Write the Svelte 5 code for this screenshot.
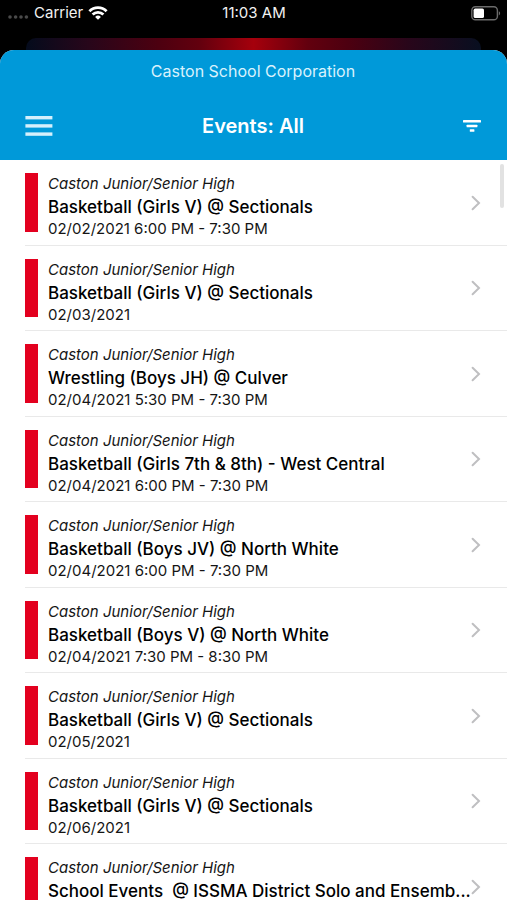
<script lang="ts">

	// Types

	type SchoolEvent = {
		school: string;
		title: string;
		date: string;
	};



	// Variables

	const school: string = "Caston Junior/Senior High";

	const events: SchoolEvent[] = [
		{school, title: "Basketball (Girls V) @ Sectionals", date: "02/02/2021 6:00 PM - 7:30 PM"},
		{school, title: "Basketball (Girls V) @ Sectionals", date: "02/03/2021"},
		{school, title: "Wrestling (Boys JH) @ Culver", date: "02/04/2021 5:30 PM - 7:30 PM"},
		{school, title: "Basketball (Girls 7th & 8th) - West Central", date: "02/04/2021 6:00 PM - 7:30 PM"},
		{school, title: "Basketball (Boys JV) @ North White", date: "02/04/2021 6:00 PM - 7:30 PM"},
		{school, title: "Basketball (Boys V) @ North White", date: "02/04/2021 7:30 PM - 8:30 PM"},
		{school, title: "Basketball (Girls V) @ Sectionals", date: "02/05/2021"},
		{school, title: "Basketball (Girls V) @ Sectionals", date: "02/06/2021"},
		{school, title: "School Events  @ ISSMA District Solo and Ensemb...", date: ""}
	];

</script>

<div class="screen">

	<div class="status">
		<div class="carrier">
			<svg class="signal" width="22" height="6" viewBox="0 0 22 6">
				<circle cx="3" cy="3" r="1.8" />
				<circle cx="8.6" cy="3" r="1.8" />
				<circle cx="14" cy="3" r="1.8" />
				<circle cx="19.4" cy="3" r="1.8" />
			</svg>
			<span>Carrier</span>
			<svg width="20" height="16" viewBox="0 0 20 16" fill="none" stroke="#fff" stroke-width="2.8">
				<path d="M1.4 6.2a12.2 12.2 0 0 1 17.2 0" />
				<path d="M4.6 9.6a7.7 7.7 0 0 1 10.8 0" />
				<path d="M10 14.8l-2.9-2.9a4.1 4.1 0 0 1 5.8 0z" fill="#fff" stroke="none" />
			</svg>
		</div>
		<span class="time">11:03 AM</span>
		<svg class="battery" width="30" height="15" viewBox="0 0 30 15">
			<rect x="0.8" y="0.8" width="25.6" height="13" rx="3.6" fill="none" stroke="#6b6b6b" stroke-width="1.4" />
			<rect x="2.6" y="2.6" width="10.4" height="9.4" rx="1.6" fill="#fff" />
			<path d="M27.8 5.2c1.8.6 1.8 3.6 0 4.2z" fill="#6b6b6b" />
		</svg>
	</div>

	<div class="behind"></div>

	<main class="sheet">
		<header>
			<p>Caston School Corporation</p>
			<div class="bar">
				<button aria-label="Menu">
					<svg width="28" height="20" viewBox="0 0 28 20" fill="#d5f0fc">
						<rect x="0.4" y="0" width="27" height="3.4" />
						<rect x="0.4" y="8.2" width="27" height="3.4" />
						<rect x="0.4" y="16.4" width="27" height="3.4" />
					</svg>
				</button>
				<h1>Events: All</h1>
				<button aria-label="Filter">
					<svg width="18" height="12" viewBox="0 0 18 12" fill="#fff">
						<rect x="0" y="0" width="18" height="2.6" rx="0.6" />
						<rect x="3.6" y="4.7" width="10.8" height="2.6" rx="0.6" />
						<rect x="6.8" y="9.2" width="4.6" height="2.6" rx="0.6" />
					</svg>
				</button>
			</div>
		</header>

		<div class="content">
			<ul>
				{#each events as event}
					<li>
						<span class="color"></span>
						<div class="text">
							<em>{event.school}</em>
							<strong>{event.title}</strong>
							<span>{event.date}</span>
						</div>
						<svg class="chevron" width="10" height="16" viewBox="0 0 10 16">
							<path d="M1.6 1.8l6.4 6.2-6.4 6.2" fill="none" stroke="#bfbfc1" stroke-width="2" stroke-linecap="round" />
						</svg>
					</li>
				{/each}
			</ul>
			<div class="thumb"></div>
		</div>
	</main>

</div>

<style>

	:global(body){
		margin: 0;
		background: #000;
	}

	.screen{
		display: flex;
		flex-direction: column;
		height: 100vh;
		background: #000;
		font-family: Inter, "Liberation Sans", sans-serif;
		color: #151515;
	}

	.status{
		display: grid;
		grid-template-columns: 1fr auto 1fr;
		align-items: center;
		height: 26px;
		margin-bottom: 12px;
		padding: 0 6px 0 7px;
		color: #f2f2f2;
		font-size: 15px;
		line-height: 20px;
	}

	.carrier{
		display: flex;
		align-items: center;
		gap: 5px;
	}

	.signal{
		fill: #4a4a4a;
		margin-top: 8px;
	}

	.battery{
		justify-self: end;
	}

	.behind{
		height: 12px;
		margin: 0 26px;
		border-radius: 10px 10px 0 0;
		background: linear-gradient(90deg, #040b1c, #28061a 14%, #4c0010 29%, #62000e 38%, #a5000c 50%, #62000e 62%, #4c0010 71%, #28061a 84%, #080f20);
	}

	.sheet{
		display: flex;
		flex-direction: column;
		flex: 1;
		min-height: 0;
		border-radius: 14px 14px 0 0;
		background: #fff;
		overflow: hidden;
	}

	header{
		padding: 9px 26px 14px 25px;
		background: #0099d9;
		color: #fff;
	}

	header
	p{
		margin: 0 0 23px;
		color: #d9f2fd;
		font-size: 16px;
		line-height: 24px;
		text-align: center;
	}

	.bar{
		display: grid;
		grid-template-columns: 1fr auto 1fr;
		align-items: center;
		height: 40px;
	}

	h1{
		margin: 0;
		font-size: 20px;
		font-weight: 600;
		line-height: 24px;
	}

	button{
		display: flex;
		justify-self: start;
		padding: 0;
		border: none;
		background: none;
		cursor: pointer;
	}

	button:last-child{
		justify-self: end;
	}

	.content{
		position: relative;
		flex: 1;
		min-height: 0;
	}

	ul{
		height: 100%;
		margin: 0;
		padding: 0 0 0 25px;
		list-style: none;
		overflow-y: auto;
		scrollbar-width: none;
	}

	li{
		display: flex;
		box-sizing: border-box;
		height: 86px;
		padding: 13px 26px 13px 0;
		border-bottom: 1px solid #e9e9e9;
	}

	li:nth-child(even){
		height: 85px;
	}

	.color{
		flex: none;
		width: 13px;
		background: #e3001f;
	}

	.text{
		display: flex;
		flex-direction: column;
		flex: 1;
		min-width: 0;
		padding: 1px 0 0 10px;
		font-size: 15px;
		line-height: 18px;
	}

	em{
		line-height: 20px;
	}

	strong{
		font-size: 17px;
		font-weight: 500;
		line-height: 26px;
		color: #000;
		white-space: pre;
	}

	.chevron{
		flex: none;
		align-self: center;
	}

	.thumb{
		position: absolute;
		top: 4px;
		right: 3px;
		width: 4px;
		height: 44px;
		border-radius: 2px;
		background: #e2e2e2;
	}

</style>
